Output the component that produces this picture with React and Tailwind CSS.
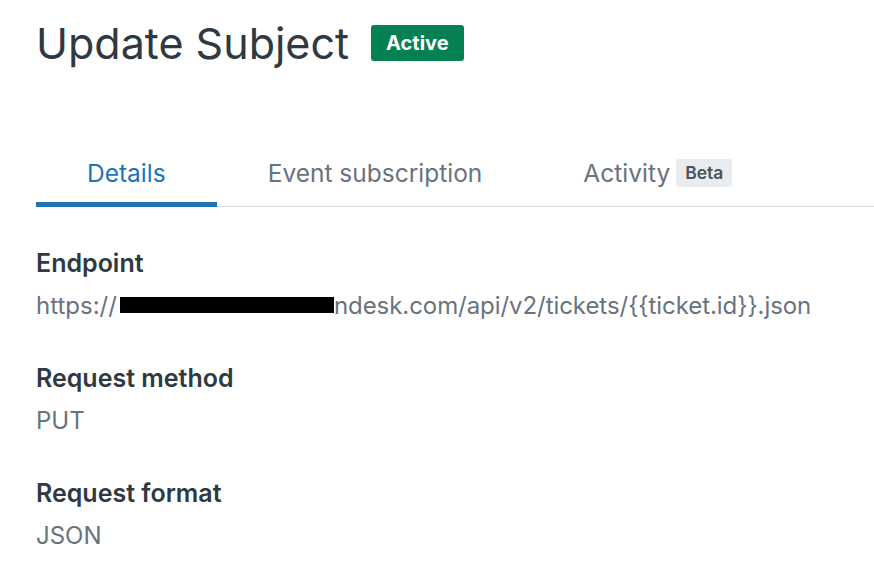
import React from "react";

const Field = ({ label, children, first }) => (
  <div className={first ? "" : "mt-[41px]"}>
    <div className="text-[25px] leading-[32px] font-semibold text-[#2f3941]">{label}</div>
    <div className="mt-[12px] text-[24px] leading-[30px] text-[#68737d]">{children}</div>
  </div>
);

const App = () => {
  return (
    <div
      className="w-[874px] h-[578px] bg-white overflow-hidden pl-[36px]"
      style={{ fontFamily: "Inter, 'Noto Sans', sans-serif" }}
    >
      <div className="flex items-center pt-[17px]">
        <h1 className="text-[43px] leading-[52px] font-normal text-[#2f3941]">
          Update Subject
        </h1>
        <span className="ml-[22px] h-[36px] px-[15px] flex items-center rounded-[3px] bg-[#038153] text-white text-[20px] font-bold">
          Active
        </span>
      </div>

      <div className="mt-[89px] flex border-b border-[#d8dcde]">
        <button className="px-[51px] pb-[14px] -mb-px border-b-[5px] border-[#1f73b7] text-[24.5px] leading-[30px] text-[#1f73b7]">
          Details
        </button>
        <button className="px-[51px] pb-[14px] -mb-px border-b-[5px] border-transparent text-[24.5px] leading-[30px] text-[#68737d]">
          Event subscription
        </button>
        <button className="pl-[50px] pb-[14px] -mb-px border-b-[5px] border-transparent text-[24.5px] leading-[30px] text-[#68737d] flex items-center">
          Activity
          <span className="ml-[6px] h-[28px] px-[9px] flex items-center rounded-[3px] bg-[#e9ebed] text-[#49545c] text-[17.5px] font-semibold">
            Beta
          </span>
        </button>
      </div>

      <div className="mt-[40px]">
        <Field label="Endpoint" first>
          https://
          <span className="inline-block align-[1px] ml-[3px] w-[214px] h-[16px] bg-black" />
          <span className="tracking-[-0.06px]">ndesk.com/api/v2/tickets/{"{{ticket.id}}"}.json</span>
        </Field>
        <Field label="Request method">PUT</Field>
        <Field label="Request format">JSON</Field>
      </div>
    </div>
  );
};

export default App;
